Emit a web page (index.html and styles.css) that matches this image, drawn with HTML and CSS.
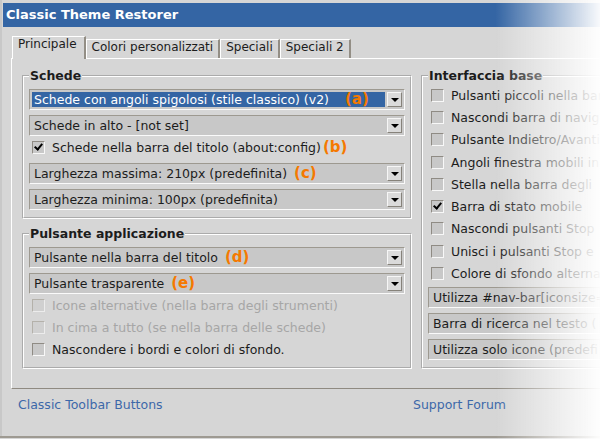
FILE: index.html
```html
<!DOCTYPE html>
<html>
<head>
  <title>Classic Theme Restorer</title>
  <link rel="stylesheet" href="styles.css">
</head>
<body>

<div id="window">
  <div class="titlebar">Classic Theme Restorer</div>

  <div class="tabs">
    <span class="tab selected">Principale</span>
    <span class="tab">Colori personalizzati</span>
    <span class="tab">Speciali</span>
    <span class="tab">Speciali 2</span>
  </div>

  <div class="panel">
    <div class="left">
      <fieldset class="group">
        <legend>Schede</legend>
        <div class="menulist focused">
          <span class="value">Schede con angoli spigolosi (stile classico) (v2)<b class="note wide">(a)</b></span>
          <span class="drop"></span>
        </div>
        <div class="menulist">
          <span class="value">Schede in alto - [not set]</span>
          <span class="drop"></span>
        </div>
        <label class="row"><span class="check on"></span><span>Schede nella barra del titolo (about:config)<b class="note tight">(b)</b></span></label>
        <div class="menulist">
          <span class="value">Larghezza massima: 210px (predefinita)<b class="note">(c)</b></span>
          <span class="drop"></span>
        </div>
        <div class="menulist">
          <span class="value">Larghezza minima: 100px (predefinita)</span>
          <span class="drop"></span>
        </div>
      </fieldset>

      <fieldset class="group second">
        <legend>Pulsante applicazione</legend>
        <div class="menulist">
          <span class="value">Pulsante nella barra del titolo<b class="note">(d)</b></span>
          <span class="drop"></span>
        </div>
        <div class="menulist">
          <span class="value">Pulsante trasparente<b class="note">(e)</b></span>
          <span class="drop"></span>
        </div>
        <label class="row disabled"><span class="check"></span><span>Icone alternative (nella barra degli strumenti)</span></label>
        <label class="row disabled"><span class="check"></span><span>In cima a tutto (se nella barra delle schede)</span></label>
        <label class="row"><span class="check"></span><span>Nascondere i bordi e colori di sfondo.</span></label>
      </fieldset>
    </div>

    <fieldset class="group right">
      <legend>Interfaccia base</legend>
      <label class="row"><span class="check"></span><span>Pulsanti piccoli nella barra</span></label>
      <label class="row"><span class="check"></span><span>Nascondi barra di navigazione</span></label>
      <label class="row"><span class="check"></span><span>Pulsante Indietro/Avanti</span></label>
      <label class="row"><span class="check"></span><span>Angoli finestra mobili in</span></label>
      <label class="row"><span class="check"></span><span>Stella nella barra degli</span></label>
      <label class="row"><span class="check on"></span><span>Barra di stato mobile</span></label>
      <label class="row"><span class="check"></span><span>Nascondi pulsanti Stop</span></label>
      <label class="row"><span class="check"></span><span>Unisci i pulsanti Stop e</span></label>
      <label class="row"><span class="check"></span><span>Colore di sfondo alterna</span></label>
      <div class="menulist">
        <span class="value">Utilizza #nav-bar[iconsize=</span>
        <span class="drop"></span>
      </div>
      <div class="menulist">
        <span class="value">Barra di ricerca nel testo (</span>
        <span class="drop"></span>
      </div>
      <div class="menulist">
        <span class="value">Utilizza solo icone (predefi</span>
        <span class="drop"></span>
      </div>
    </fieldset>
  </div>

  <div class="footer">
    <a href="#">Classic Toolbar Buttons</a>
    <a href="#">Support Forum</a>
  </div>
</div>

<div class="fade"></div>

</body>
</html>
```

FILE: styles.css
```css
body {
  margin: 0;
  background: #d6d6d6;
  font-family: "DejaVu Sans", sans-serif;
  font-size: 12.5px;
  color: #1c1c1c;
  overflow: hidden;
}

#window {
  width: 760px;
  height: 438px;
  padding-top: 3px;
  box-sizing: border-box;
  border-bottom: 2px solid #9e9a92;
  box-shadow: inset 2px 0 0 #c8c8c8;
}

.titlebar {
  margin-left: 3px;
  height: 24px;
  line-height: 24px;
  padding-left: 3px;
  background: #3465a4;
  color: #fff;
  font-size: 13px;
  font-weight: bold;
}

/* tabs */
.tabs {
  display: flex;
  align-items: flex-end;
  margin-top: 9px;
  padding-left: 12px;
  position: relative;
  z-index: 1;
  font-size: 12px;
}
.tab {
  line-height: 15px;
  padding: 0 5px 3px;
  border-top: 1px solid #fff;
  border-left: 1px solid #fff;
  border-right: 2px solid #938e85;
  background: #d6d6d6;
}
.tab.selected {
  padding: 0 7px 7px 5px;
  margin-bottom: -1px;
}

.panel {
  display: flex;
  align-items: flex-start;
  gap: 9px;
  margin-left: 11px;
  padding: 9px 0 19px 10px;
  border-top: 1px solid #fff;
  border-left: 1px solid #fff;
  border-bottom: 1px solid #8f8a81;
}
.left { width: 390px; flex: none; }

/* group boxes */
.group {
  margin: 0;
  padding: 1px 5px 7px;
  border: 2px groove #fff;
  min-width: 0;
}
.group.second { margin-top: 7px; }
.group.right { flex: 1; }
.group legend {
  padding: 0 1px;
  line-height: 15px;
  font-weight: bold;
}

/* drop-down lists */
.menulist {
  display: flex;
  height: 21px;
  box-sizing: border-box;
  margin-top: 5px;
  padding: 2px;
  border: 1px solid;
  border-color: #9d9990 #fafafa #fafafa #9d9990;
  background: #c8c8c8;
}
.menulist .value {
  flex: 1;
  padding-left: 2px;
  line-height: 15px;
  white-space: nowrap;
}
.menulist.focused .value {
  background: #3465a4;
  color: #fff;
  margin-right: 2px;
}
.drop {
  width: 15px;
  flex: none;
  box-sizing: border-box;
  border: 1px solid;
  border-color: #f6f6f6 #86827a #86827a #f6f6f6;
  background: #dadada;
  display: flex;
  align-items: center;
  justify-content: center;
}
.drop::after {
  content: "";
  border-left: 4px solid transparent;
  border-right: 4px solid transparent;
  border-top: 4px solid #000;
}
.right .menulist { width: 300px; }
.right div:first-of-type { margin-top: 2px; }

.note {
  color: #f57900;
  font-size: 15px;
  line-height: 15px;
  margin-left: 7px;
}
.note.wide { margin-left: 16px; }
.note.tight { margin-left: 2px; }

/* check boxes */
.row {
  display: flex;
  align-items: center;
  gap: 7px;
  height: 22px;
  padding-left: 3px;
  white-space: nowrap;
}
.right .row { height: 22.3px; }
.check {
  width: 13px;
  height: 13px;
  flex: none;
  box-sizing: border-box;
  border: 1px solid;
  border-color: #8f8b84 #f8f8f8 #f8f8f8 #8f8b84;
  background: #c8c8c8;
  position: relative;
}
.check.on::after {
  content: "";
  position: absolute;
  left: 3px;
  top: 0px;
  width: 3px;
  height: 6px;
  border-right: 2px solid #000;
  border-bottom: 2px solid #000;
  transform: rotate(40deg);
}
.row.disabled { color: #a6a6a6; }
.row.disabled .check {
  border-color: #b4b1aa #ececec #ececec #b4b1aa;
  background: #d0d0d0;
}

.footer {
  display: grid;
  grid-template-columns: 395px auto;
  justify-content: start;
  padding: 8px 0 0 18px;
  line-height: 15px;
}
.footer a {
  color: #3d68a9;
  text-decoration: none;
}

.fade {
  position: fixed;
  top: 0;
  right: 0;
  width: 105px;
  height: 100%;
  background: linear-gradient(to right, rgba(255,255,255,0), rgba(255,255,255,0.97));
  pointer-events: none;
}
```
